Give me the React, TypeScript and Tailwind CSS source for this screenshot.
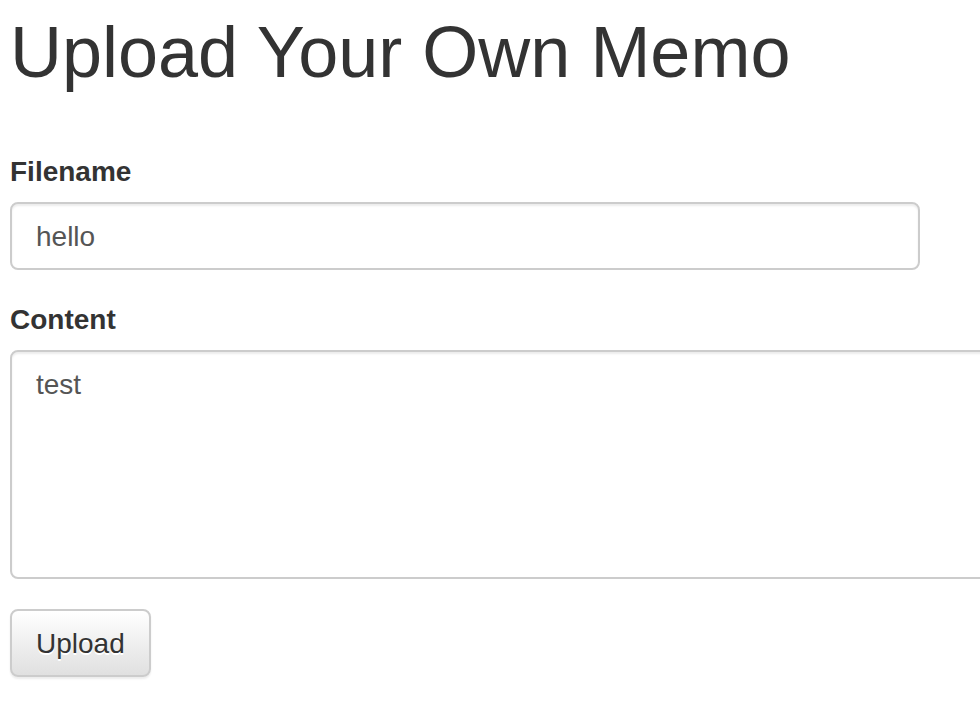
export default function App() {
  return (
    <div className="h-screen w-full overflow-hidden bg-white font-['Liberation_Sans',Arial,sans-serif] text-[#333]">
      <div className="pl-[10px]">
        {/* Seitentitel */}
        <h1 className="mt-[13px] text-[72px] leading-[79px] font-normal text-[#333]">
          Upload Your Own Memo
        </h1>

        <form className="mt-[60px]" onSubmit={(e) => e.preventDefault()}>
          <div className="mb-[30px]">
            <label className="mb-[10px] block text-[28px] leading-[40px] font-bold">Filename</label>
            <input
              readOnly
              value="hello"
              className="block h-[68px] w-[910px] rounded-[8px] border-2 border-[#ccc] bg-white px-[24px] pt-[13px] pb-[11px] text-[28px] leading-[40px] text-[#555] shadow-[inset_0_2px_2px_rgba(0,0,0,0.075)] outline-none"
            />
          </div>

          <div className="mb-[30px]">
            <label className="mb-[10px] block text-[28px] leading-[40px] font-bold">Content</label>
            <textarea
              readOnly
              value="test"
              className="block h-[229px] w-[1000px] resize-none rounded-[8px] border-2 border-[#ccc] bg-white px-[24px] pt-[13px] pb-[11px] text-[28px] leading-[40px] text-[#555] shadow-[inset_0_2px_2px_rgba(0,0,0,0.075)] outline-none"
            />
          </div>

          <button
            type="submit"
            className="h-[68px] rounded-[8px] border-2 border-[#ccc] bg-gradient-to-b from-white to-[#e0e0e0] px-[24px] pt-[13px] pb-[11px] text-[28px] leading-[40px] text-[#333] shadow-[0_2px_2px_rgba(0,0,0,0.075)] [text-shadow:0_2px_0_#fff]"
          >
            Upload
          </button>
        </form>
      </div>
    </div>
  );
}
